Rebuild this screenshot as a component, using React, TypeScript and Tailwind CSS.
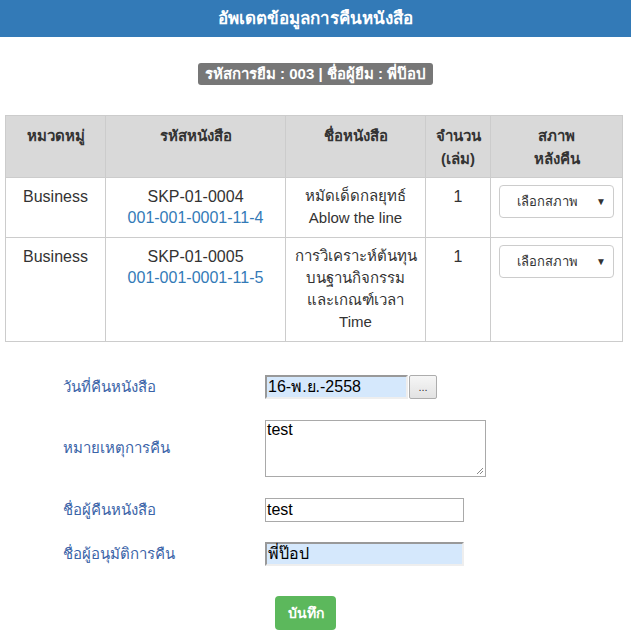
import React from "react"

const rows = [
  { cat: "Business", code: "SKP-01-0004", isbn: "001-001-0001-11-4", title: ["หมัดเด็ดกลยุทธ์", "Ablow the line"], qty: 1 },
  { cat: "Business", code: "SKP-01-0005", isbn: "001-001-0001-11-5", title: ["การวิเคราะห์ต้นทุน", "บนฐานกิจกรรม", "และเกณฑ์เวลา", "Time"], qty: 1 },
]

function StatusSelect() {
  return (
    <div className="ml-[8px] mt-[7px] flex h-[33px] w-[115px] items-center justify-between rounded-[4px] border border-[#cccccc] bg-white pl-[17px] pr-[7px] text-[13px] text-[#333]">
      <span>เลือกสภาพ</span>
      <span className="text-[10px]">▼</span>
    </div>
  )
}

function FormRow({ label, children, className }: { label: string; children: React.ReactNode; className?: string }) {
  return (
    <div className={"flex items-center " + (className ?? "")}>
      <div className="w-[265px] pl-[63px] text-[15px] text-[#3b64a8]">{label}</div>
      {children}
    </div>
  )
}

export default function App() {
  return (
    <div className="min-h-screen bg-white font-['Liberation_Sans',Tahoma,sans-serif] text-[#333]">
      <div className="flex h-[37px] items-center justify-center bg-[#337ab7] text-[17px] font-bold text-white">
        อัพเดตข้อมูลการคืนหนังสือ
      </div>

      <div className="mt-[26px] flex justify-center">
        <span className="rounded-[3px] bg-[#777777] px-[7px] py-[1px] text-[15px] font-bold leading-[20px] text-white">
          รหัสการยืม : 003 | ชื่อผู้ยืม : พี่ป๊อป
        </span>
      </div>

      <table className="ml-[5px] mt-[30px] w-[618px] border-collapse text-[16px]">
        <thead>
          <tr className="bg-[#d9d9d9] text-[15px] font-bold leading-[23px]">
            <th className="h-[62px] w-[100px] border border-[#cccccc] pb-[21px] align-top pt-[8px]">หมวดหมู่</th>
            <th className="w-[180px] border border-[#cccccc] align-top pt-[8px]">รหัสหนังสือ</th>
            <th className="w-[140px] border border-[#cccccc] align-top pt-[8px]">ชื่อหนังสือ</th>
            <th className="w-[65px] border border-[#cccccc] align-top pt-[8px]">จำนวน<br />(เล่ม)</th>
            <th className="border border-[#cccccc] align-top pt-[8px]">สภาพ<br />หลังคืน</th>
          </tr>
        </thead>
        <tbody className="leading-[21px]">
          {rows.map((r) => (
            <tr key={r.code}>
              <td className="border border-[#cccccc] px-[8px] pt-[8px] pb-[8px] text-center align-top">{r.cat}</td>
              <td className="border border-[#cccccc] px-[8px] pt-[8px] text-center align-top">
                <div>{r.code}</div>
                <div className="text-[#337ab7]">{r.isbn}</div>
              </td>
              <td className="border border-[#cccccc] px-[4px] pt-[7px] pb-[8px] text-center align-top text-[15px] leading-[22px]">
                {r.title.map((t) => (
                  <div key={t}>{t}</div>
                ))}
              </td>
              <td className="border border-[#cccccc] pt-[8px] text-center align-top">{r.qty}</td>
              <td className="border border-[#cccccc] align-top">
                <StatusSelect />
              </td>
            </tr>
          ))}
        </tbody>
      </table>

      <div className="mt-[33px] flex flex-col">
        <FormRow label="วันที่คืนหนังสือ">
          <div className="flex items-center">
            <div className="flex h-[24px] w-[143px] items-center border-2 border-[#999] border-b-[#eee] border-r-[#eee] bg-[#d5e8fc] pl-[1px] text-[16px] text-black">
              16-พ.ย.-2558
            </div>
            <div className="ml-[1px] flex h-[24px] w-[28px] items-center justify-center rounded-[2px] border border-[#adadad] bg-gradient-to-b from-[#f6f6f6] to-[#e2e2e2] text-[11px] text-[#333]">
              ...
            </div>
          </div>
        </FormRow>

        <FormRow label="หมายเหตุการคืน" className="mt-[21px]">
          <div className="relative h-[57px] w-[221px] border border-[#a9a9a9] bg-white pl-[1px] text-[16px] leading-[18px] text-black">
            test
            <svg className="absolute bottom-[1px] right-[1px]" width="8" height="8" viewBox="0 0 8 8">
              <path d="M7 1 L1 7 M7 4 L4 7" stroke="#888" strokeWidth="1" />
            </svg>
          </div>
        </FormRow>

        <FormRow label="ชื่อผู้คืนหนังสือ" className="mt-[21px]">
          <div className="flex h-[24px] w-[199px] items-center border border-[#a9a9a9] bg-white pl-[1px] text-[16px] text-black">
            test
          </div>
        </FormRow>

        <FormRow label="ชื่อผู้อนุมัติการคืน" className="mt-[20px]">
          <div className="flex h-[24px] w-[199px] items-center border-2 border-[#999] border-b-[#eee] border-r-[#eee] bg-[#d5e8fc] pl-[1px] text-[16px] text-black">
            พี่ป๊อป
          </div>
        </FormRow>

        <div className="mt-[30px] pl-[275px]">
          <button className="h-[34px] w-[61px] rounded-[4px] bg-[#5cb85c] text-[14px] font-bold text-white">
            บันทึก
          </button>
        </div>
      </div>
    </div>
  )
}
